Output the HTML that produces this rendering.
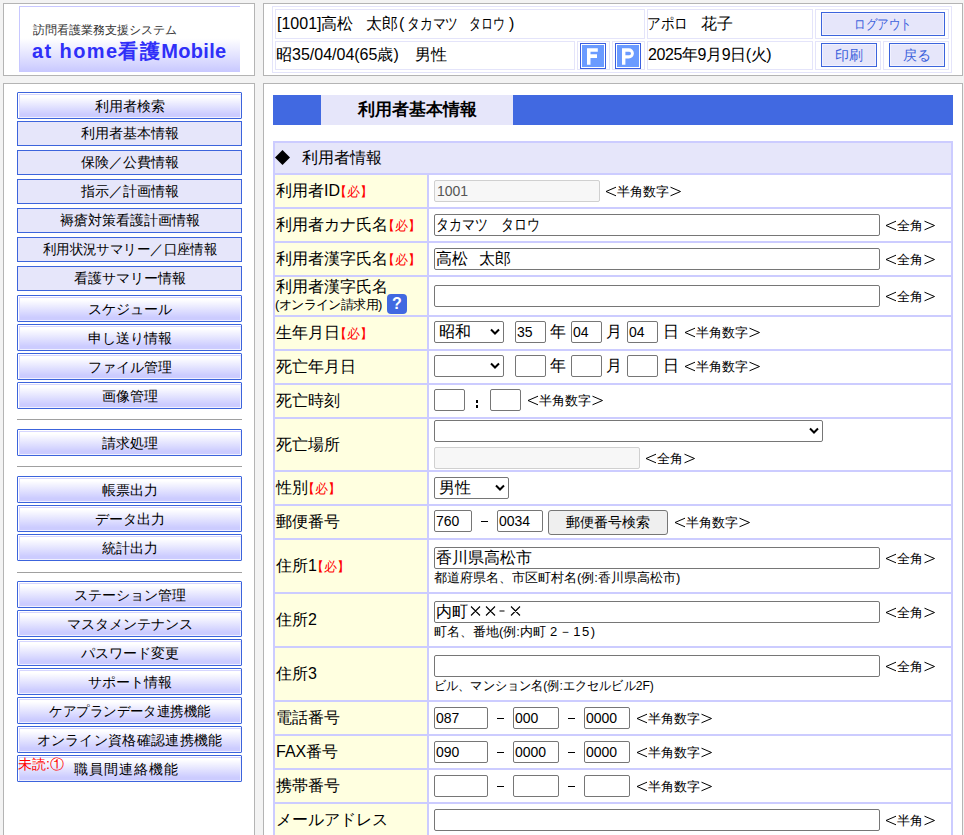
<!DOCTYPE html><html><head><meta charset="utf-8"><style>
*{box-sizing:border-box;margin:0;padding:0}
html,body{width:964px;height:835px;overflow:hidden}
body{background:#f3f3f3;font-family:"Liberation Sans",sans-serif;position:relative;color:#000}
.ab{position:absolute}
.box{position:absolute;background:#fff;border:1px solid #b4b4b4}
.hc{position:absolute;border:1px solid #e4e4fa;background:#fff}
.hb{position:absolute;background:#e6e6fa;border:1px solid #3c64dc;box-shadow:inset 1px 1px 0 #f2f2ff,inset -1px -1px 0 #f2f2ff;color:#3d62dc;font-size:14px;text-align:center;line-height:22px}
.icon{position:absolute;width:26px;height:26px;background:#6b9bff;border:1px solid #3b5ee0;box-shadow:inset 0 0 0 1px #fff;color:#fff;font-weight:bold;font-size:23px;text-align:center;line-height:25px}
.mf{position:absolute;left:17px;width:225px;height:25px;background:#e6e6fa;border:1px solid #3c64dc;font-size:14px;text-align:center;line-height:23px;white-space:nowrap}
.mg{position:absolute;left:17px;width:225px;height:27px;border:1px solid #3c64dc;border-radius:1px;background:linear-gradient(#fff 15%,#ccccff 85%);box-shadow:inset 1px 1px 0 #fff,inset 2px 2px 0 #d6d6ff,inset -1px -1px 0 #f0f0ff;font-size:14px;text-align:center;line-height:26px;white-space:nowrap}
.hr{position:absolute;left:17px;width:225px;height:1px;background:#a0a0a0}
.lbl{position:absolute;left:275px;width:152px;background:#ffffe0;font-size:16px;white-space:nowrap;padding-left:1px}
.val{position:absolute;left:429px;width:522px;background:#fff}
.req{color:#f00;font-size:13px;margin-left:-6px}
.inp{position:absolute;height:22px;border:1px solid #767676;border-radius:2px;background:#fff;font-size:16px;line-height:20px;padding-left:1px;white-space:nowrap;overflow:hidden}
.dis{position:absolute;height:22px;border:1px solid #d0d0d0;border-radius:2px;background:#f7f7f7;color:#555;font-size:14px;line-height:20px;padding-left:2px}
.sel{position:absolute;height:22px;border:1px solid #767676;border-radius:2px;background:#fff;font-size:16px;line-height:20px;padding-left:4px;white-space:nowrap}
.sel svg{position:absolute;right:3px;top:6px}
.t{position:absolute;font-size:14px;white-space:nowrap;line-height:16px}
.sub{position:absolute;font-size:13px;white-space:nowrap;line-height:14px}
</style></head><body>
<div class="box" style="left:3px;top:3px;width:252px;height:73px"></div>
<div class="ab" style="left:19px;top:6px;width:221px;height:66px;border-top:1px solid #c8c8ff;border-left:1px solid #c8c8ff;background:linear-gradient(#fff 0%,#fff 48%,#c8c8ff 100%)"></div>
<div class="t" style="left:33px;top:22px;font-size:12px;color:#333">訪問看護業務支援システム</div>
<div class="t" style="left:32px;top:40px;font-size:20px;line-height:22px;font-weight:bold;color:#2f2ff8;letter-spacing:1.4px">at home看護<span style="letter-spacing:0.3px">Mobile</span></div>
<div class="box" style="left:263px;top:3px;width:700px;height:73px"></div>
<div class="ab" style="left:272px;top:6px;width:680px;height:67px;border:1px solid #e4e4fa"></div>
<div class="hc" style="left:275px;top:9px;width:370px;height:30px"></div>
<div class="hc" style="left:647px;top:9px;width:166px;height:30px"></div>
<div class="hc" style="left:815px;top:9px;width:134px;height:30px"></div>
<div class="hc" style="left:275px;top:41px;width:300px;height:29px"></div>
<div class="hc" style="left:577px;top:41px;width:33px;height:29px"></div>
<div class="hc" style="left:612px;top:41px;width:33px;height:29px"></div>
<div class="hc" style="left:647px;top:41px;width:166px;height:29px"></div>
<div class="hc" style="left:815px;top:41px;width:66px;height:29px"></div>
<div class="hc" style="left:883px;top:41px;width:66px;height:29px"></div>
<div class="t" style="left:277px;top:15px;font-size:16px;line-height:18px">[1001]高松</div>
<div class="t" style="left:366px;top:15px;font-size:16px;line-height:18px">太郎</div>
<div class="t" style="left:399px;top:15px;font-size:16px;line-height:18px">(</div>
<div class="t" style="left:407px;top:15px;font-size:16px;line-height:18px;transform:scaleX(.8);transform-origin:0 0">タカマツ</div>
<div class="t" style="left:469px;top:15px;font-size:16px;line-height:18px;transform:scaleX(.75);transform-origin:0 0">タロウ</div>
<div class="t" style="left:509px;top:15px;font-size:16px;line-height:18px">)</div>
<div class="t" style="left:276px;top:46px;font-size:16px;line-height:18px">昭35/04/04(65歳)</div>
<div class="t" style="left:415px;top:46px;font-size:16px;line-height:18px">男性</div>
<div class="t" style="left:647px;top:15px;font-size:16px;line-height:18px;transform:scaleX(.85);transform-origin:0 0">アポロ</div>
<div class="t" style="left:701px;top:15px;font-size:16px;line-height:18px">花子</div>
<div class="t" style="left:648px;top:46px;font-size:16px;line-height:18px;letter-spacing:-0.4px">2025年9月9日(火)</div>
<div class="hb" style="left:821px;top:12px;width:124px;height:24px"><span style="display:inline-block;transform:scaleX(.82)">ログアウト</span></div>
<div class="hb" style="left:821px;top:43px;width:56px;height:24px">印刷</div>
<div class="hb" style="left:889px;top:43px;width:56px;height:24px">戻る</div>
<div class="icon" style="left:580px;top:43px"><svg width="26" height="26" style="position:absolute;left:-1px;top:-1px"><path d="M7 5.2H17.8V8.7H10.5V11.3H17V15H10.5V21.7H7Z" fill="#fff"/></svg></div>
<div class="icon" style="left:615px;top:43px"><svg width="26" height="26" style="position:absolute;left:-1px;top:-1px"><path fill-rule="evenodd" d="M7 5.2H13.8A5.1 5.1 0 0 1 13.8 15.4H10.4V21.7H7Z M10.4 8.8H14.3A1.7 1.7 0 0 1 14.3 12.2H10.4Z" fill="#fff"/></svg></div>
<div class="box" style="left:3px;top:83px;width:252px;height:800px"></div>
<div class="box" style="left:263px;top:83px;width:700px;height:800px"></div>
<div class="mf" style="top:121px">利用者基本情報</div>
<div class="mf" style="top:150px">保険／公費情報</div>
<div class="mf" style="top:179px">指示／計画情報</div>
<div class="mf" style="top:208px">褥瘡対策看護計画情報</div>
<div class="mf" style="top:237px"><span style="display:inline-block;transform:scaleX(.96)">利用状況サマリー／口座情報</span></div>
<div class="mf" style="top:266px">看護サマリー情報</div>
<div class="mg" style="top:92px">利用者検索</div>
<div class="mg" style="top:295px">スケジュール</div>
<div class="mg" style="top:324px">申し送り情報</div>
<div class="mg" style="top:353px">ファイル管理</div>
<div class="mg" style="top:382px">画像管理</div>
<div class="mg" style="top:429px">請求処理</div>
<div class="mg" style="top:476px">帳票出力</div>
<div class="mg" style="top:505px">データ出力</div>
<div class="mg" style="top:534px">統計出力</div>
<div class="mg" style="top:581px">ステーション管理</div>
<div class="mg" style="top:610px">マスタメンテナンス</div>
<div class="mg" style="top:639px">パスワード変更</div>
<div class="mg" style="top:668px">サポート情報</div>
<div class="mg" style="top:697px"><span style="display:inline-block;transform:scaleX(.96)">ケアプランデータ連携機能</span></div>
<div class="mg" style="top:726px;letter-spacing:0.3px">オンライン資格確認連携機能</div>
<div class="mg" style="top:755px;padding-right:7px;letter-spacing:1px">職員間連絡機能</div>
<div class="hr" style="top:419px"></div>
<div class="hr" style="top:466px"></div>
<div class="hr" style="top:572px"></div>
<div class="t" style="left:18px;top:756px;color:#f00;font-size:14px">未読:①</div>
<div class="ab" style="left:273px;top:95px;width:680px;height:30px;background:#4169e1"></div>
<div class="ab" style="left:321px;top:95px;width:192px;height:30px;background:#e6e6fa;text-align:center;font-weight:bold;font-size:17px;line-height:30px">利用者基本情報</div>
<div class="ab" style="left:273px;top:141px;width:680px;height:700px;background:#ccccff"></div>
<div class="ab" style="left:275px;top:143px;width:676px;height:30px;background:#e6e6fa;font-size:16px;line-height:30px;padding-left:27px">利用者情報</div>
<svg class="ab" style="left:275px;top:150px" width="16" height="16"><path d="M7.5 0 L15 7.5 L7.5 15 L0 7.5Z" fill="#000"/></svg>
<div class="lbl" style="top:175px;height:32px;line-height:32px">利用者ID<span class="req">【必】</span></div>
<div class="val" style="top:175px;height:32px"></div>
<div class="lbl" style="top:209px;height:32px;line-height:32px">利用者カナ氏名<span class="req">【必】</span></div>
<div class="val" style="top:209px;height:32px"></div>
<div class="lbl" style="top:243px;height:32px;line-height:32px">利用者漢字氏名<span class="req">【必】</span></div>
<div class="val" style="top:243px;height:32px"></div>
<div class="lbl" style="top:277px;height:38px;line-height:38px"></div>
<div class="val" style="top:277px;height:38px"></div>
<div class="lbl" style="top:317px;height:32px;line-height:32px">生年月日<span class="req">【必】</span></div>
<div class="val" style="top:317px;height:32px"></div>
<div class="lbl" style="top:351px;height:32px;line-height:32px">死亡年月日</div>
<div class="val" style="top:351px;height:32px"></div>
<div class="lbl" style="top:385px;height:32px;line-height:32px">死亡時刻</div>
<div class="val" style="top:385px;height:32px"></div>
<div class="lbl" style="top:419px;height:51px;line-height:51px">死亡場所</div>
<div class="val" style="top:419px;height:51px"></div>
<div class="lbl" style="top:472px;height:32px;line-height:32px">性別<span class="req">【必】</span></div>
<div class="val" style="top:472px;height:32px"></div>
<div class="lbl" style="top:506px;height:32px;line-height:32px">郵便番号</div>
<div class="val" style="top:506px;height:32px"></div>
<div class="lbl" style="top:540px;height:52px;line-height:52px">住所1<span class="req">【必】</span></div>
<div class="val" style="top:540px;height:52px"></div>
<div class="lbl" style="top:594px;height:52px;line-height:52px">住所2</div>
<div class="val" style="top:594px;height:52px"></div>
<div class="lbl" style="top:648px;height:52px;line-height:52px">住所3</div>
<div class="val" style="top:648px;height:52px"></div>
<div class="lbl" style="top:702px;height:32px;line-height:32px">電話番号</div>
<div class="val" style="top:702px;height:32px"></div>
<div class="lbl" style="top:736px;height:32px;line-height:32px">FAX番号</div>
<div class="val" style="top:736px;height:32px"></div>
<div class="lbl" style="top:770px;height:32px;line-height:32px">携帯番号</div>
<div class="val" style="top:770px;height:32px"></div>
<div class="lbl" style="top:804px;height:32px;line-height:32px">メールアドレス</div>
<div class="val" style="top:804px;height:32px"></div>
<div class="t" style="left:276px;top:278px;font-size:16px;line-height:18px">利用者漢字氏名</div>
<div class="t" style="left:275px;top:297px;font-size:13px;line-height:16px"><span style="letter-spacing:-0.6px">(オンライン請求用)</span></div>
<div class="ab" style="left:387px;top:294px;width:20px;height:20px;border-radius:4px;background:#4169e1;color:#fff;font-weight:bold;font-size:16px;line-height:20px;text-align:center">?</div>
<div class="dis" style="left:434px;top:180px;width:166px">1001</div>
<div class="ab" style="left:605px;top:186px;width:76px;height:11px"><svg width="12" height="11" style="position:absolute;left:0;top:0"><polyline points="11,1.2 1,5.5 11,9.8" fill="none" stroke="#000" stroke-width="1"/></svg><div style="position:absolute;left:12px;top:-1px;font-size:13px;line-height:14px;white-space:nowrap">半角数字</div><svg width="11" height="11" style="position:absolute;left:65px;top:0"><polyline points="0.5,1.2 10.5,5.5 0.5,9.8" fill="none" stroke="#000" stroke-width="1"/></svg></div>
<div class="inp" style="left:434px;top:214px;width:446px"><span style="display:inline-block;transform:scaleX(.81);transform-origin:0 0">タカマツ　タロウ</span></div>
<div class="ab" style="left:885px;top:220px;width:50px;height:11px"><svg width="12" height="11" style="position:absolute;left:0;top:0"><polyline points="11,1.2 1,5.5 11,9.8" fill="none" stroke="#000" stroke-width="1"/></svg><div style="position:absolute;left:12px;top:-1px;font-size:13px;line-height:14px;white-space:nowrap">全角</div><svg width="11" height="11" style="position:absolute;left:39px;top:0"><polyline points="0.5,1.2 10.5,5.5 0.5,9.8" fill="none" stroke="#000" stroke-width="1"/></svg></div>
<div class="inp" style="left:434px;top:248px;width:446px">高松<span style="display:inline-block;width:11px"></span>太郎</div>
<div class="ab" style="left:885px;top:254px;width:50px;height:11px"><svg width="12" height="11" style="position:absolute;left:0;top:0"><polyline points="11,1.2 1,5.5 11,9.8" fill="none" stroke="#000" stroke-width="1"/></svg><div style="position:absolute;left:12px;top:-1px;font-size:13px;line-height:14px;white-space:nowrap">全角</div><svg width="11" height="11" style="position:absolute;left:39px;top:0"><polyline points="0.5,1.2 10.5,5.5 0.5,9.8" fill="none" stroke="#000" stroke-width="1"/></svg></div>
<div class="inp" style="left:434px;top:285px;width:446px"></div>
<div class="ab" style="left:885px;top:291px;width:50px;height:11px"><svg width="12" height="11" style="position:absolute;left:0;top:0"><polyline points="11,1.2 1,5.5 11,9.8" fill="none" stroke="#000" stroke-width="1"/></svg><div style="position:absolute;left:12px;top:-1px;font-size:13px;line-height:14px;white-space:nowrap">全角</div><svg width="11" height="11" style="position:absolute;left:39px;top:0"><polyline points="0.5,1.2 10.5,5.5 0.5,9.8" fill="none" stroke="#000" stroke-width="1"/></svg></div>
<div class="sel" style="left:434px;top:321px;width:70px">昭和<svg width="10" height="7"><path d="M1 1.5 L5 5.5 L9 1.5" stroke="#000" stroke-width="2" fill="none"/></svg></div>
<div class="inp" style="left:515px;top:321px;width:31px"><span style="font-size:14px">35</span></div>
<div class="t" style="left:550px;top:324px"><span style="font-size:16px">年</span></div>
<div class="inp" style="left:571px;top:321px;width:31px"><span style="font-size:14px">04</span></div>
<div class="t" style="left:606px;top:324px"><span style="font-size:16px">月</span></div>
<div class="inp" style="left:627px;top:321px;width:31px"><span style="font-size:14px">04</span></div>
<div class="t" style="left:663px;top:324px"><span style="font-size:16px">日</span></div>
<div class="ab" style="left:684px;top:327px;width:76px;height:11px"><svg width="12" height="11" style="position:absolute;left:0;top:0"><polyline points="11,1.2 1,5.5 11,9.8" fill="none" stroke="#000" stroke-width="1"/></svg><div style="position:absolute;left:12px;top:-1px;font-size:13px;line-height:14px;white-space:nowrap">半角数字</div><svg width="11" height="11" style="position:absolute;left:65px;top:0"><polyline points="0.5,1.2 10.5,5.5 0.5,9.8" fill="none" stroke="#000" stroke-width="1"/></svg></div>
<div class="sel" style="left:434px;top:355px;width:70px"><svg width="10" height="7"><path d="M1 1.5 L5 5.5 L9 1.5" stroke="#000" stroke-width="2" fill="none"/></svg></div>
<div class="inp" style="left:515px;top:355px;width:31px"></div>
<div class="t" style="left:550px;top:358px"><span style="font-size:16px">年</span></div>
<div class="inp" style="left:571px;top:355px;width:31px"></div>
<div class="t" style="left:606px;top:358px"><span style="font-size:16px">月</span></div>
<div class="inp" style="left:627px;top:355px;width:31px"></div>
<div class="t" style="left:663px;top:358px"><span style="font-size:16px">日</span></div>
<div class="ab" style="left:684px;top:361px;width:76px;height:11px"><svg width="12" height="11" style="position:absolute;left:0;top:0"><polyline points="11,1.2 1,5.5 11,9.8" fill="none" stroke="#000" stroke-width="1"/></svg><div style="position:absolute;left:12px;top:-1px;font-size:13px;line-height:14px;white-space:nowrap">半角数字</div><svg width="11" height="11" style="position:absolute;left:65px;top:0"><polyline points="0.5,1.2 10.5,5.5 0.5,9.8" fill="none" stroke="#000" stroke-width="1"/></svg></div>
<div class="inp" style="left:434px;top:389px;width:31px"></div>
<div class="ab" style="left:476px;top:400px;width:2px;height:3px;background:#000"></div><div class="ab" style="left:476px;top:405px;width:2px;height:3px;background:#000"></div>
<div class="inp" style="left:490px;top:389px;width:31px"></div>
<div class="ab" style="left:527px;top:395px;width:76px;height:11px"><svg width="12" height="11" style="position:absolute;left:0;top:0"><polyline points="11,1.2 1,5.5 11,9.8" fill="none" stroke="#000" stroke-width="1"/></svg><div style="position:absolute;left:12px;top:-1px;font-size:13px;line-height:14px;white-space:nowrap">半角数字</div><svg width="11" height="11" style="position:absolute;left:65px;top:0"><polyline points="0.5,1.2 10.5,5.5 0.5,9.8" fill="none" stroke="#000" stroke-width="1"/></svg></div>
<div class="sel" style="left:434px;top:420px;width:389px"><svg width="10" height="7"><path d="M1 1.5 L5 5.5 L9 1.5" stroke="#000" stroke-width="2" fill="none"/></svg></div>
<div class="dis" style="left:434px;top:447px;width:206px"></div>
<div class="ab" style="left:645px;top:453px;width:50px;height:11px"><svg width="12" height="11" style="position:absolute;left:0;top:0"><polyline points="11,1.2 1,5.5 11,9.8" fill="none" stroke="#000" stroke-width="1"/></svg><div style="position:absolute;left:12px;top:-1px;font-size:13px;line-height:14px;white-space:nowrap">全角</div><svg width="11" height="11" style="position:absolute;left:39px;top:0"><polyline points="0.5,1.2 10.5,5.5 0.5,9.8" fill="none" stroke="#000" stroke-width="1"/></svg></div>
<div class="sel" style="left:434px;top:477px;width:75px">男性<svg width="10" height="7"><path d="M1 1.5 L5 5.5 L9 1.5" stroke="#000" stroke-width="2" fill="none"/></svg></div>
<div class="inp" style="left:434px;top:510px;width:38px"><span style="font-size:14px">760</span></div>
<div class="ab" style="left:481px;top:521px;width:7px;height:1px;background:#000"></div>
<div class="inp" style="left:497px;top:510px;width:46px"><span style="font-size:14px">0034</span></div>
<div class="ab" style="left:548px;top:510px;width:120px;height:25px;background:#efefef;border:1px solid #767676;border-radius:3px;font-size:14px;line-height:23px;text-align:center">郵便番号検索</div>
<div class="ab" style="left:674px;top:517px;width:76px;height:11px"><svg width="12" height="11" style="position:absolute;left:0;top:0"><polyline points="11,1.2 1,5.5 11,9.8" fill="none" stroke="#000" stroke-width="1"/></svg><div style="position:absolute;left:12px;top:-1px;font-size:13px;line-height:14px;white-space:nowrap">半角数字</div><svg width="11" height="11" style="position:absolute;left:65px;top:0"><polyline points="0.5,1.2 10.5,5.5 0.5,9.8" fill="none" stroke="#000" stroke-width="1"/></svg></div>
<div class="inp" style="left:434px;top:547px;width:446px">香川県高松市</div>
<div class="ab" style="left:885px;top:553px;width:50px;height:11px"><svg width="12" height="11" style="position:absolute;left:0;top:0"><polyline points="11,1.2 1,5.5 11,9.8" fill="none" stroke="#000" stroke-width="1"/></svg><div style="position:absolute;left:12px;top:-1px;font-size:13px;line-height:14px;white-space:nowrap">全角</div><svg width="11" height="11" style="position:absolute;left:39px;top:0"><polyline points="0.5,1.2 10.5,5.5 0.5,9.8" fill="none" stroke="#000" stroke-width="1"/></svg></div>
<div class="sub" style="left:434px;top:571px">都道府県名、市区町村名(例:香川県高松市)</div>
<div class="inp" style="left:434px;top:601px;width:446px">内町<svg width="54" height="14" style="vertical-align:-1px;margin-left:2px"><path d="M1 2.5L10 11.5M10 2.5L1 11.5M16 2.5L25 11.5M25 2.5L16 11.5M29.5 7H34.5M41 2.5L50 11.5M50 2.5L41 11.5" stroke="#000" stroke-width="1.1" fill="none"/></svg></div>
<div class="ab" style="left:885px;top:607px;width:50px;height:11px"><svg width="12" height="11" style="position:absolute;left:0;top:0"><polyline points="11,1.2 1,5.5 11,9.8" fill="none" stroke="#000" stroke-width="1"/></svg><div style="position:absolute;left:12px;top:-1px;font-size:13px;line-height:14px;white-space:nowrap">全角</div><svg width="11" height="11" style="position:absolute;left:39px;top:0"><polyline points="0.5,1.2 10.5,5.5 0.5,9.8" fill="none" stroke="#000" stroke-width="1"/></svg></div>
<div class="sub" style="left:434px;top:625px">町名、番地(例:内町<span style="letter-spacing:1.5px;margin-left:4px">2－15</span>)</div>
<div class="inp" style="left:434px;top:655px;width:446px"></div>
<div class="ab" style="left:885px;top:661px;width:50px;height:11px"><svg width="12" height="11" style="position:absolute;left:0;top:0"><polyline points="11,1.2 1,5.5 11,9.8" fill="none" stroke="#000" stroke-width="1"/></svg><div style="position:absolute;left:12px;top:-1px;font-size:13px;line-height:14px;white-space:nowrap">全角</div><svg width="11" height="11" style="position:absolute;left:39px;top:0"><polyline points="0.5,1.2 10.5,5.5 0.5,9.8" fill="none" stroke="#000" stroke-width="1"/></svg></div>
<div class="sub" style="left:434px;top:679px"><span style="display:inline-block;transform:scaleX(.934);transform-origin:0 0">ビル、マンション名(例:エクセルビル2F)</span></div>
<div class="inp" style="left:434px;top:707px;width:54px"><span style="font-size:14px">087</span></div>
<div class="ab" style="left:497px;top:718px;width:7px;height:1px;background:#000"></div>
<div class="inp" style="left:513px;top:707px;width:46px"><span style="font-size:14px">000</span></div>
<div class="ab" style="left:568px;top:718px;width:7px;height:1px;background:#000"></div>
<div class="inp" style="left:584px;top:707px;width:46px"><span style="font-size:14px">0000</span></div>
<div class="ab" style="left:636px;top:713px;width:76px;height:11px"><svg width="12" height="11" style="position:absolute;left:0;top:0"><polyline points="11,1.2 1,5.5 11,9.8" fill="none" stroke="#000" stroke-width="1"/></svg><div style="position:absolute;left:12px;top:-1px;font-size:13px;line-height:14px;white-space:nowrap">半角数字</div><svg width="11" height="11" style="position:absolute;left:65px;top:0"><polyline points="0.5,1.2 10.5,5.5 0.5,9.8" fill="none" stroke="#000" stroke-width="1"/></svg></div>
<div class="inp" style="left:434px;top:741px;width:54px"><span style="font-size:14px">090</span></div>
<div class="ab" style="left:497px;top:752px;width:7px;height:1px;background:#000"></div>
<div class="inp" style="left:513px;top:741px;width:46px"><span style="font-size:14px">0000</span></div>
<div class="ab" style="left:568px;top:752px;width:7px;height:1px;background:#000"></div>
<div class="inp" style="left:584px;top:741px;width:46px"><span style="font-size:14px">0000</span></div>
<div class="ab" style="left:636px;top:747px;width:76px;height:11px"><svg width="12" height="11" style="position:absolute;left:0;top:0"><polyline points="11,1.2 1,5.5 11,9.8" fill="none" stroke="#000" stroke-width="1"/></svg><div style="position:absolute;left:12px;top:-1px;font-size:13px;line-height:14px;white-space:nowrap">半角数字</div><svg width="11" height="11" style="position:absolute;left:65px;top:0"><polyline points="0.5,1.2 10.5,5.5 0.5,9.8" fill="none" stroke="#000" stroke-width="1"/></svg></div>
<div class="inp" style="left:434px;top:775px;width:54px"><span style="font-size:14px"></span></div>
<div class="ab" style="left:497px;top:786px;width:7px;height:1px;background:#000"></div>
<div class="inp" style="left:513px;top:775px;width:46px"><span style="font-size:14px"></span></div>
<div class="ab" style="left:568px;top:786px;width:7px;height:1px;background:#000"></div>
<div class="inp" style="left:584px;top:775px;width:46px"><span style="font-size:14px"></span></div>
<div class="ab" style="left:636px;top:781px;width:76px;height:11px"><svg width="12" height="11" style="position:absolute;left:0;top:0"><polyline points="11,1.2 1,5.5 11,9.8" fill="none" stroke="#000" stroke-width="1"/></svg><div style="position:absolute;left:12px;top:-1px;font-size:13px;line-height:14px;white-space:nowrap">半角数字</div><svg width="11" height="11" style="position:absolute;left:65px;top:0"><polyline points="0.5,1.2 10.5,5.5 0.5,9.8" fill="none" stroke="#000" stroke-width="1"/></svg></div>
<div class="inp" style="left:434px;top:809px;width:446px"></div>
<div class="ab" style="left:885px;top:815px;width:50px;height:11px"><svg width="12" height="11" style="position:absolute;left:0;top:0"><polyline points="11,1.2 1,5.5 11,9.8" fill="none" stroke="#000" stroke-width="1"/></svg><div style="position:absolute;left:12px;top:-1px;font-size:13px;line-height:14px;white-space:nowrap">半角</div><svg width="11" height="11" style="position:absolute;left:39px;top:0"><polyline points="0.5,1.2 10.5,5.5 0.5,9.8" fill="none" stroke="#000" stroke-width="1"/></svg></div>
</body></html>
